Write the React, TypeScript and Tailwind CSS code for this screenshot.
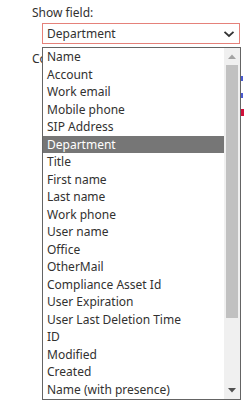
import React from "react";

const items = [
  "Name",
  "Account",
  "Work email",
  "Mobile phone",
  "SIP Address",
  "Department",
  "Title",
  "First name",
  "Last name",
  "Work phone",
  "User name",
  "Office",
  "OtherMail",
  "Compliance Asset Id",
  "User Expiration",
  "User Last Deletion Time",
  "ID",
  "Modified",
  "Created",
  "Name (with presence)",
];

export default function App() {
  return (
    <div
      className="relative w-[244px] h-[400px] overflow-hidden bg-white text-[#323130]"
      style={{ fontFamily: '"Noto Sans", "Open Sans", sans-serif' }}
    >
      <div className="pl-[32px] pt-[4px] flex flex-col">
        <div className="text-[12px] leading-[18px] h-[19px]">Show field:</div>
        <div className="ml-[10px] w-[198px] h-[21px] border border-[#e5817a] flex items-center justify-between pl-[4px] pr-[3px]">
          <span className="text-[12px] leading-[18px]">Department</span>
          <svg width="12" height="8" viewBox="0 0 12 8" className="mr-[1px]">
            <path d="M1.5 1.8 L6 6 L10.5 1.8" fill="none" stroke="#333" strokeWidth="1.8" />
          </svg>
        </div>
        <div className="mt-[6px] text-[12px] leading-[18px] whitespace-nowrap">Co</div>
        <div className="mt-[8px] ml-[209px] w-[2px] h-[5px] bg-[#4a5bd0]" />
        <div className="mt-[12px] ml-[209px] w-[2px] h-[5px] bg-[#4a5bd0]" />
        <div className="mt-[11px] ml-[209px] w-[3px] h-[7px] bg-[#d0103a]" />
      </div>

      {/* dropdown list overlay */}
      <div className="absolute left-[42px] top-[47px] w-[199px] h-[353px] border border-[#646464] bg-white flex">
        <div className="flex-1 flex flex-col">
          {items.map((it) => (
            <div
              key={it}
              className={
                "h-[17.5px] flex items-center pl-[4px] text-[12px] leading-[17px] whitespace-nowrap " +
                (it === "Department" ? "bg-[#767676] text-white" : "")
              }
            >
              {it}
            </div>
          ))}
        </div>
        <div className="w-[16px] h-full bg-[#f0f0f0] flex flex-col items-center">
          <div className="h-[17px] w-full flex items-center justify-center">
            <svg width="8" height="5" viewBox="0 0 8 5">
              <path d="M0 5 L4 0.5 L8 5 Z" fill="#a3a3a3" />
            </svg>
          </div>
          <div className="w-[12px] h-[253px] bg-[#c1c1c1]" />
          <div className="flex-1" />
          <div className="h-[17px] w-full flex items-center justify-center">
            <svg width="8" height="5" viewBox="0 0 8 5">
              <path d="M0 0 L8 0 L4 4.5 Z" fill="#505050" />
            </svg>
          </div>
        </div>
      </div>
    </div>
  );
}
